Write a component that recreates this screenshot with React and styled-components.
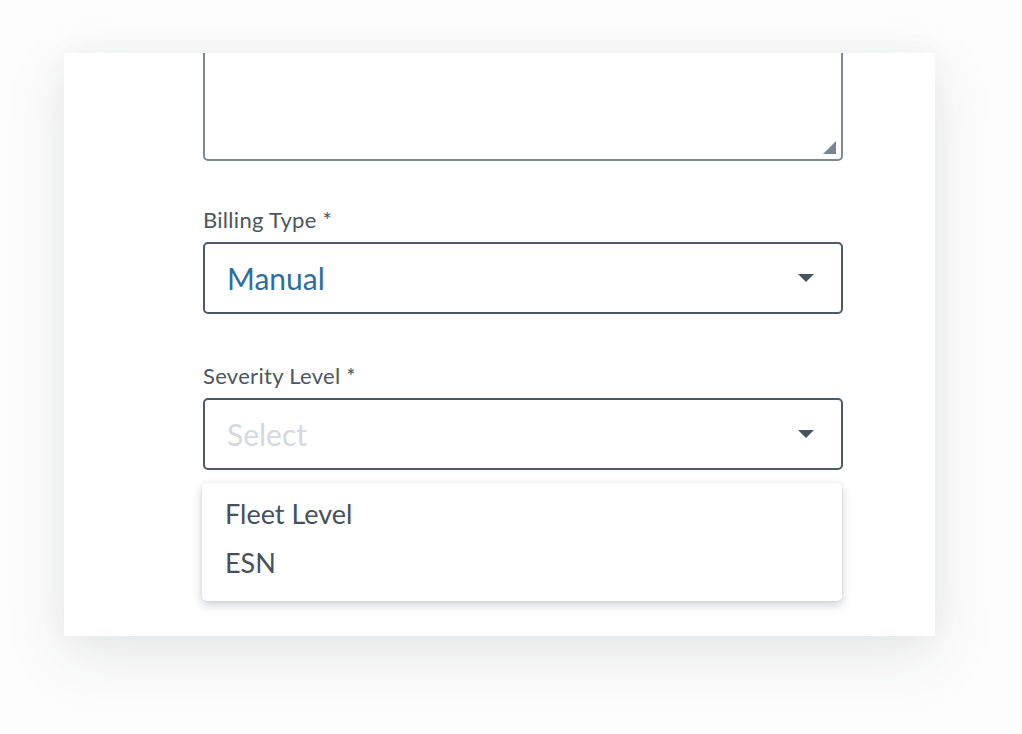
import styled, { createGlobalStyle } from 'styled-components';

const GlobalStyle = createGlobalStyle`
  html, body {
    margin: 0;
    padding: 0;
    background: #ffffff;
  }
  body {
    font-family: Lato, "Noto Sans", sans-serif;
  }
`;

const Page = styled.div`
  width: 1022px;
  height: 734px;
  padding: 53px 87px 0 64px;
  box-sizing: border-box;
  background: #fdfdfd;
`;

const Card = styled.div`
  width: 871px;
  height: 583px;
  background: #ffffff;
  overflow: hidden;
  box-shadow: 0 20px 60px rgba(40, 45, 55, 0.1), 0 0 30px rgba(40, 45, 55, 0.04);
  padding: 0 92px 0 139px;
  box-sizing: border-box;
  display: flex;
  flex-direction: column;
`;

const TextArea = styled.div`
  margin-top: -30px;
  height: 138px;
  border: 2px solid #7d8792;
  border-radius: 5px;
  position: relative;
  box-sizing: border-box;
`;

const ResizeGrip = styled.div`
  position: absolute;
  right: 5px;
  bottom: 5px;
  width: 0;
  height: 0;
  border-left: 13px solid transparent;
  border-bottom: 13px solid #7a8593;
`;

const Field = styled.div`
  display: flex;
  flex-direction: column;
  margin-top: ${(p) => p.$top}px;
`;

const Label = styled.label`
  font-size: 22px;
  letter-spacing: 0.3px;
  color: #4c5660;
  line-height: 24px;
  margin-bottom: 10px;
`;

const SelectBox = styled.div`
  height: 72px;
  border: 2px solid #4d5966;
  border-radius: 5px;
  box-sizing: border-box;
  display: flex;
  align-items: center;
  justify-content: space-between;
  padding: 0 27px 0 22px;
`;

const Value = styled.span`
  font-size: 30px;
  color: ${(p) => (p.$placeholder ? '#d5d9dd' : '#2f6e9c')};
`;

const Caret = styled.div`
  width: 0;
  height: 0;
  border-left: 8px solid transparent;
  border-right: 8px solid transparent;
  border-top: 8px solid #47535f;
`;

const Menu = styled.div`
  margin: 13px 1px 0 -1px;
  height: 118px;
  background: #ffffff;
  border-radius: 5px;
  box-shadow: 0 4px 10px rgba(60, 70, 90, 0.25), 0 0 3px rgba(60, 70, 90, 0.08);
  padding: 6px 0 0 23px;
  box-sizing: border-box;
`;

const Option = styled.div`
  font-size: 27px;
  color: #47505a;
  line-height: 49px;
`;

const App = () => {
  return (
    <Page>
      <GlobalStyle />
      <Card>
        <TextArea>
          <ResizeGrip />
        </TextArea>
        <Field $top={47}>
          <Label>Billing Type *</Label>
          <SelectBox>
            <Value>Manual</Value>
            <Caret />
          </SelectBox>
        </Field>
        <Field $top={50}>
          <Label>Severity Level *</Label>
          <SelectBox>
            <Value $placeholder>Select</Value>
            <Caret />
          </SelectBox>
        </Field>
        <Menu>
          <Option>Fleet Level</Option>
          <Option>ESN</Option>
        </Menu>
      </Card>
    </Page>
  );
};

export default App;
